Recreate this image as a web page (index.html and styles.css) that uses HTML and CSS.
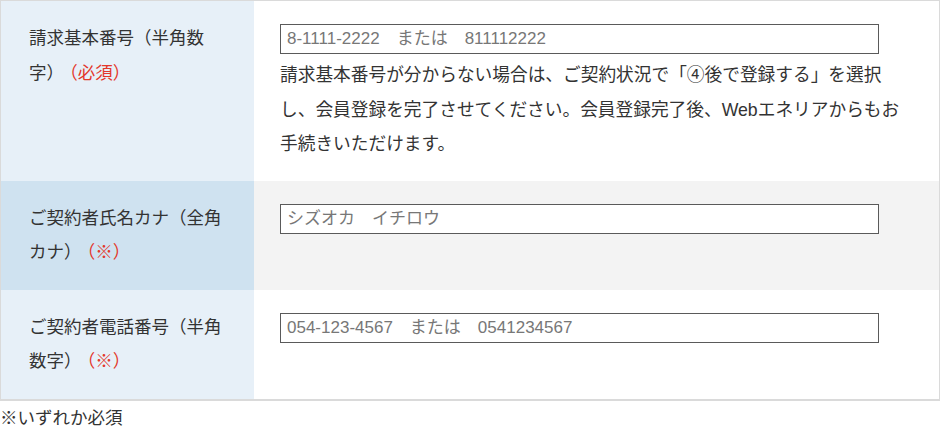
FILE: index.html
```html
<!DOCTYPE html>
<html lang="ja">
<head>
<meta charset="utf-8">
<title>フォーム</title>
<link rel="stylesheet" href="styles.css">
</head>
<body>
<div class="form-table">
  <div class="row">
    <div class="label">請求基本番号（半角数字）<span class="req">（必須）</span></div>
    <div class="field">
      <input class="input" type="text" placeholder="8-1111-2222　または　811112222">
      <p class="note">請求基本番号が分からない場合は、ご契約状況で「④後で登録する」を選択し、会員登録を完了させてください。会員登録完了後、Webエネリアからもお手続きいただけます。</p>
    </div>
  </div>
  <div class="row row-alt">
    <div class="label">ご契約者氏名カナ（全角カナ）<span class="req">（※）</span></div>
    <div class="field">
      <input class="input" type="text" placeholder="シズオカ　イチロウ">
    </div>
  </div>
  <div class="row">
    <div class="label">ご契約者電話番号（半角数字）<span class="req">（※）</span></div>
    <div class="field">
      <input class="input" type="text" placeholder="054-123-4567　または　0541234567">
    </div>
  </div>
</div>
<p class="footnote">※いずれか必須</p>
</body>
</html>
```
FILE: styles.css
```css
* { box-sizing: border-box; }
body {
  margin: 0;
  font-family: "Liberation Sans", "Noto Sans CJK JP", sans-serif;
  color: #333;
  background: #fff;
}
.form-table {
  width: 940px;
  border: 1px solid #dadada;
  border-bottom-width: 2px;
}
.row {
  display: grid;
  grid-template-columns: 253px 1fr;
}
.label {
  background: #e7f0f8;
  padding: 20px 26px 20px 28px;
  font-size: 17.5px;
  line-height: 34.5px;
}
.req { color: #e3372b; margin-left: 5px; }
.field {
  background: #fff;
  padding: 23px 30px 19px 26px;
}
.row-alt .label { background: #cfe2f0; }
.row-alt .field { background: #f3f3f3; }
.input {
  display: block;
  width: 599px;
  height: 30px;
  margin: 0;
  border: 1px solid #5a5a5a;
  border-radius: 0;
  background: #fff;
  padding: 0 6px;
  font-family: "Liberation Sans", "Noto Sans CJK JP", sans-serif;
  font-size: 17px;
  color: #333;
  outline: none;
}
.input::placeholder { color: #777; }
.note {
  margin: 4px 0 0;
  font-size: 17.7px;
  line-height: 34.5px;
}
.footnote {
  margin: 4px 0 0;
  font-size: 17.5px;
  line-height: 26px;
}
```
